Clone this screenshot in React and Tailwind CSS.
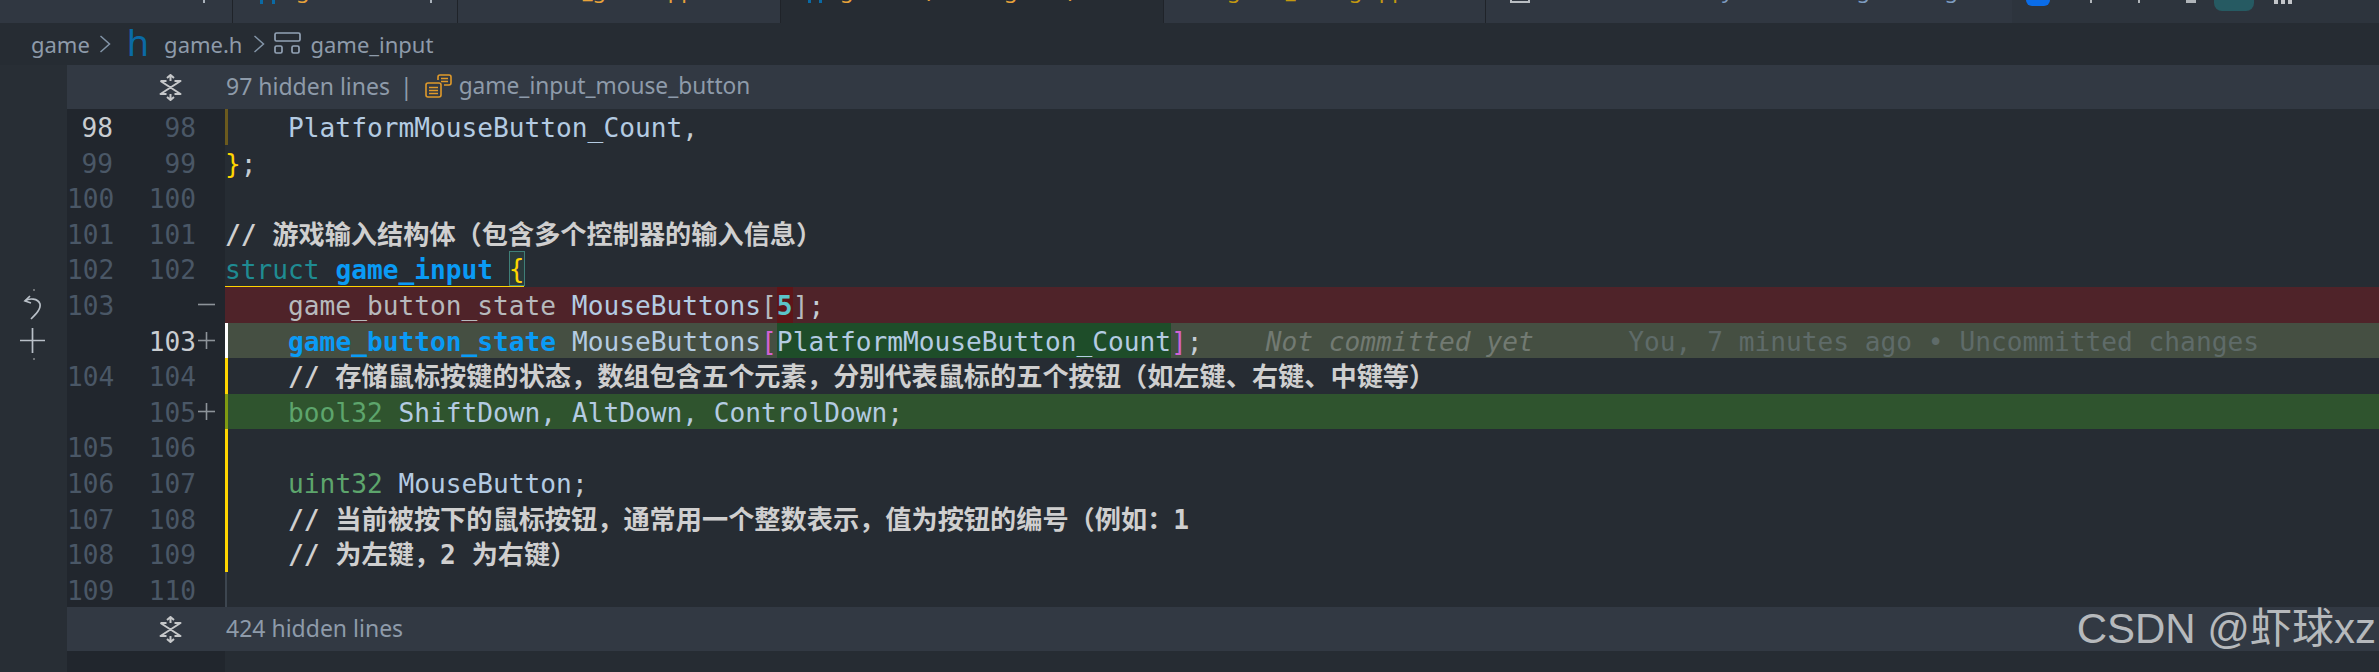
const UI = { fontFamily: '"Noto Sans", sans-serif' };

const C = {
  id: "text-[#b4cbe2]",
  punct: "text-[#c4ccd4]",
  yellow: "text-[#ffd500]",
  kw: "text-[#1f8b92]",
  blueB: "text-[#0a9bf5] font-bold",
  gray: "text-[#b7b9bc]",
  teal: "text-[#5cc4c8] font-bold",
  pink: "text-[#d262d2]",
  green: "text-[#5da56c]",
  cm: "text-[#cfcfcf] font-bold",
  blame1: "text-[#727a72] italic",
  blame2: "text-[#5f6b69]",
};

const rows = [
  { a: "98", b: "98", aOn: true, bar: "shadow-[inset_3px_0_0_#6b5a1e]", code: [["    PlatformMouseButton_Count", C.id], [",", C.punct]] },
  { a: "99", b: "99", code: [["}", C.yellow], [";", C.punct]] },
  { a: "100", b: "100", code: [] },
  { a: "101", b: "101", code: [["// 游戏输入结构体（包含多个控制器的输入信息）", C.cm]] },
  { a: "102", b: "102", code: [["struct", C.kw], [" ", C.id], ["game_input", C.blueB], [" ", C.id], ["{", C.yellow, "box"]], under: true },
  { a: "103", b: "", mark: "minus", bg: "bg-[#4f2329]", code: [["    game_button_state", C.gray], [" MouseButtons", C.id], ["[", C.gray], ["5", C.teal, "del"], ["]", C.gray], [";", C.punct]] },
  { a: "", b: "103", bOn: true, mark: "plus", bg: "bg-[#454f42]", bar: "shadow-[inset_3px_0_0_#ffffff]", code: [["    ", C.id], ["game_button_state", C.blueB], [" MouseButtons", C.id], ["[", C.pink], ["PlatformMouseButton_Count", C.id, "add"], ["]", C.pink], [";", C.punct], ["    ", C.id], ["Not committed yet", C.blame1], ["      ", C.id], ["You, 7 minutes ago • Uncommitted changes", C.blame2]] },
  { a: "104", b: "104", bar: "shadow-[inset_3px_0_0_#ffd500]", code: [["    // 存储鼠标按键的状态，数组包含五个元素，分别代表鼠标的五个按钮（如左键、右键、中键等）", C.cm]] },
  { a: "", b: "105", mark: "plus", bg: "bg-[#2f542e]", bar: "shadow-[inset_3px_0_0_#7f9a12]", code: [["    ", C.id], ["bool32", C.green], [" ShiftDown, AltDown, ControlDown", C.id], [";", C.punct]] },
  { a: "105", b: "106", bar: "shadow-[inset_3px_0_0_#ffd500]", code: [] },
  { a: "106", b: "107", bar: "shadow-[inset_3px_0_0_#ffd500]", code: [["    ", C.id], ["uint32", C.green], [" MouseButton", C.id], [";", C.punct]] },
  { a: "107", b: "108", bar: "shadow-[inset_3px_0_0_#ffd500]", code: [["    // 当前被按下的鼠标按钮，通常用一个整数表示，值为按钮的编号（例如：1", C.cm]] },
  { a: "108", b: "109", bar: "shadow-[inset_3px_0_0_#ffd500]", code: [["    // 为左键，2 为右键）", C.cm]] },
  { a: "109", b: "110", bar: "shadow-[inset_2px_0_0_#3d4650]", code: [] },
];

function Seg({ t, c, kind }) {
  if (kind === "del") return <span className={`${c} inline-block h-[35.6px] align-top bg-[#5f1518]`}>{t}</span>;
  if (kind === "add") return <span className={`${c} inline-block h-[35.6px] align-top bg-[#1e4d29]`}>{t}</span>;
  if (kind === "box") return <span className={`${c} inline-block h-[35px] align-top leading-[36px] outline outline-1 -outline-offset-1 outline-[#3f7f78] bg-[#2a3a3c]`}>{t}</span>;
  return <span className={c}>{t}</span>;
}

function FoldIcon() {
  return (
    <svg width="23" height="27" viewBox="0 0 23 27" fill="none" stroke="#c6c8ca" strokeWidth="2" strokeLinejoin="round">
      <path d="M11.500 1v6M8 4l3.500-3 3.500 3" />
      <path d="M11.500 26v-6M8 23l3.500 3 3.500-3" />
      <path d="M1.500 7h6M15.500 7h6L1.500 20h6M15.500 20h6L1.500 7" />
    </svg>
  );
}

function ClassIcon() {
  return (
    <svg width="27" height="24" viewBox="0 0 27 24" fill="none" stroke="#e09a2b" strokeWidth="1.6" strokeLinejoin="round">
      <path d="M13 6V3a2 2 0 0 1 2-2h9a2 2 0 0 1 2 2v6a2 2 0 0 1-2 2h-5" />
      <path d="M16 4.500h7M16 7.500h7" />
      <rect x="1" y="9" width="15" height="14" rx="2" />
      <path d="M4 13.500h9M4 16.500h9M4 19.500h9" />
    </svg>
  );
}

function StructIcon() {
  return (
    <svg width="27" height="22" viewBox="0 0 27 22" fill="none" stroke="#93a3b6" strokeWidth="1.7">
      <rect x="1" y="1" width="25" height="8" rx="1.500" />
      <rect x="1" y="14" width="7" height="7" rx="1.500" />
      <rect x="18" y="14" width="7" height="7" rx="1.500" />
    </svg>
  );
}

function Chevron() {
  return (
    <svg width="12" height="20" viewBox="0 0 12 20" fill="none" stroke="#8395a8" strokeWidth="1.500">
      <path d="M1.500 2l9 8-9 8" />
    </svg>
  );
}

function Mark({ kind }) {
  if (!kind) return null;
  return (
    <svg width="19" height="19" viewBox="0 0 19 19" fill="none" stroke="#8d9399" strokeWidth="1.6">
      <path d="M1 9.500h17" />
      {kind === "plus" && <path d="M9.500 1v17" />}
    </svg>
  );
}

function Tab({ w, pl, color, text, bg = "bg-[#303741]", border = true, children }) {
  return (
    <div className={`${w} ${bg} ${border ? "border-r border-[#1f2329]" : ""} relative shrink-0 overflow-hidden h-[23px]`}>
      {children}
      <div className={`${pl} ${color} -mt-[26px] h-[30px] leading-[30px] text-[22px] whitespace-pre`} style={UI}>{text}</div>
    </div>
  );
}

function FoldBar({ count, extra }) {
  return (
    <div className="h-[44px] shrink-0 bg-[#323943] flex items-center text-[23px] text-[#8e9baa]" style={UI}>
      <div className="w-[115px] shrink-0 flex justify-end"><FoldIcon /></div>
      <div className="pl-[44px] flex items-center whitespace-pre -mt-[2px]">
        <span>{count} hidden lines</span>
        {extra && (
          <>
            <span className="ml-[10px] mr-[12px]">|</span>
            <ClassIcon />
            <span className="ml-[7px] text-[22.7px]">{extra}</span>
          </>
        )}
      </div>
    </div>
  );
}

function Row({ r }) {
  return (
    <div className="h-[35.6px] flex leading-[38.6px] shrink-0 relative">
      <div className="w-[158px] shrink-0 bg-[#21262d] flex text-[#4a5766]">
        <div className={`w-[46px] text-right ${r.aOn ? "text-[#c9cdd1]" : ""}`}>{r.a}</div>
        <div className={`w-[83px] text-right ${r.bOn ? "text-[#c9cdd1]" : ""}`}>{r.b}</div>
        <div className="w-[29px] pl-[1px] flex items-center"><Mark kind={r.mark} /></div>
      </div>
      <div className={`flex-1 h-[35.6px] whitespace-pre overflow-hidden ${r.bg || ""} ${r.bar || ""}`}>
        {r.code.map((s, i) => <Seg key={i} t={s[0]} c={s[1]} kind={s[2]} />)}
      </div>
      {r.under && <div className="absolute left-[158px] bottom-[-1px] w-[299px] h-[2px] bg-[#ffd500]" />}
    </div>
  );
}

export default function App() {
  return (
    <div className="relative w-[2379px] h-[672px] overflow-hidden bg-[#262c33] flex flex-col">
      {/* tab bar */}
      <div className="h-[23px] shrink-0 flex bg-[#303741]">
        <Tab w="w-[233px]" pl="pl-[40px]" color="text-[#8e9baa]" text=" ">
          <div className="absolute left-[203px] top-0 w-[2px] h-[3px] bg-[#aab2bb]" />
        </Tab>
        <Tab w="w-[225px]" pl="pl-[63px]" color="text-[#e8a33a]" text="game.h">
          <div className="absolute left-[27px] top-0 w-[3px] h-[4px] bg-[#0a6aa5]" />
          <div className="absolute left-[39px] top-0 w-[3px] h-[4px] bg-[#0a6aa5]" />
          <div className="absolute left-[197px] top-0 w-[2px] h-[3px] bg-[#aab2bb]" />
        </Tab>
        <Tab w="w-[323px]" pl="pl-[63px]" color="text-[#e8a33a]" text="win32_game.cpp" />
        <Tab w="w-[383px]" pl="pl-[59px]" color="text-[#e8a33a]" text="game.h (Working Tree)" bg="bg-[#262c33]">
          <div className="absolute left-[27px] top-0 w-[3px] h-[3px] bg-[#0a6aa5]" />
          <div className="absolute left-[38px] top-0 w-[3px] h-[3px] bg-[#0a6aa5]" />
        </Tab>
        <Tab w="w-[322px]" pl="pl-[63px]" color="text-[#c49a10]" text="game_debug.cpp" />
        <Tab w="w-[526px]" pl="pl-[60px]" color="text-[#7e9cc0]" text="Commit Summary Overlaid Log Tab Bag" border={false}>
          <div className="absolute left-[24px] top-0 w-[20px] h-[3px] border-x-2 border-b-2 border-[#b9bdc2]" />
        </Tab>
        <div className="flex-1 bg-[#2d343d] relative flex items-start">
          <div className="ml-[14px] w-[24px] h-[6px] bg-[#0a6ce8] rounded-b-full" />
          <div className="ml-[40px] w-[2px] h-[3px] bg-[#b0b5ba]" />
          <div className="ml-[46px] w-[2px] h-[3px] bg-[#b0b5ba]" />
          <div className="ml-[46px] w-[10px] h-[3px] bg-[#b0b5ba]" />
          <div className="ml-[18px] w-[40px] h-[11px] bg-[#265a62] rounded-b-[8px]" />
          <div className="ml-[20px] flex gap-[3px]">
            <div className="w-[4px] h-[4px] bg-[#c2c5c9]" />
            <div className="w-[4px] h-[4px] bg-[#c2c5c9]" />
            <div className="w-[4px] h-[4px] bg-[#c2c5c9]" />
          </div>
        </div>
      </div>

      {/* breadcrumb */}
      <div className="h-[42px] shrink-0 flex items-center pl-[31px] text-[22px] text-[#8e9baa]" style={UI}>
        <span>game</span>
        <span className="ml-[9px]"><Chevron /></span>
        <span className="ml-[16px] text-[#0a6aa5] text-[36px] leading-[36px] -mt-[2px]">h</span>
        <span className="ml-[15px]">game.h</span>
        <span className="ml-[11px]"><Chevron /></span>
        <span className="ml-[9px] -mt-[2px]"><StructIcon /></span>
        <span className="ml-[9px]">game_input</span>
      </div>

      {/* body */}
      <div className="flex-1 flex min-h-0">
        <div className="w-[67px] shrink-0 bg-[#282e35] flex flex-col items-start">
          <div className="mt-[224px] ml-[33px] w-[2px] h-[2px] bg-[#6c7074]" />
          <svg className="mt-[4px] ml-[23px]" width="22" height="26" viewBox="0 0 22 26" fill="none" stroke="#b9c0c8" strokeWidth="1.700">
            <path d="M7 1L2 6l6 2" />
            <path d="M2 6c4-3 13-3 15 3 1 5-4 10-9 15" />
          </svg>
          <svg className="mt-[7px] ml-[20px]" width="25" height="25" viewBox="0 0 25 25" fill="none" stroke="#b9c0c8" strokeWidth="1.700">
            <path d="M12.500 0v25M0 12.500h25" />
          </svg>
          <div className="mt-[5px] ml-[33px] w-[2px] h-[2px] bg-[#6c7074]" />
        </div>
        <div className="flex-1 min-w-0 flex flex-col">
          <FoldBar count="97" extra="game_input_mouse_button" />
          <div className="flex flex-col text-[26.2px]" style={{ fontFamily: '"DejaVu Sans Mono", "Noto Sans CJK SC", monospace' }}>
            {rows.map((r, i) => <Row key={i} r={r} />)}
          </div>
          <FoldBar count="424" />
          <div className="flex-1 flex">
            <div className="w-[158px] bg-[#21262d]" />
          </div>
        </div>
      </div>

      {/* watermark */}
      <div
        className="absolute right-[3px] bottom-[18px] text-[42px] leading-[50px] text-[#b6b9bc] whitespace-pre"
        style={{ fontFamily: '"Liberation Sans", "Noto Sans CJK SC", sans-serif' }}
      >
        CSDN @虾球xz
      </div>
    </div>
  );
}
